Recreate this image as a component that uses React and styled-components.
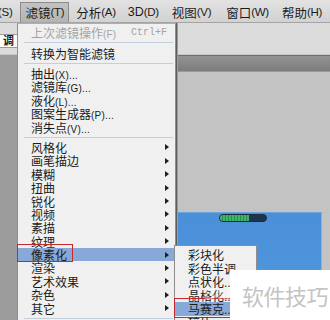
import React from "react";
import styled, { createGlobalStyle } from "styled-components";

const GlobalStyle = createGlobalStyle`
  html, body {
    margin: 0;
    padding: 0;
    background: #c3c3c3;
  }
`;

const FONT = `"Liberation Sans", "Noto Sans CJK SC", sans-serif`;

const Screen = styled.div`
  position: relative;
  width: 330px;
  height: 320px;
  overflow: hidden;
  display: flex;
  flex-direction: column;
  font-family: ${FONT};
  color: #1b1b1b;
`;

const MenuBar = styled.div`
  height: 23px;
  flex: none;
  display: flex;
  align-items: stretch;
  margin-left: -32px;
  padding-top: 2px;
  box-sizing: border-box;
  background: linear-gradient(#e2e2e2, #d2d2d2);
  border-bottom: 1px solid #a4a4a4;
  font-size: 12.5px;
`;

const BarItem = styled.div`
  display: flex;
  align-items: center;
  padding: 0 4px 1px;
  white-space: nowrap;
  border: 1px solid ${({ open }) => (open ? "#8c8c8c" : "transparent")};
  border-bottom: none;
  background: ${({ open }) => (open ? "linear-gradient(#c2c2c2, #b4b4b4)" : "transparent")};
  margin-right: ${({ gap }) => gap}px;
`;

const Paren = styled.span`
  font-size: 11.5px;
  letter-spacing: -0.3px;
`;

const OptionsBar = styled.div`
  height: 32px;
  flex: none;
  display: flex;
  align-items: center;
  background: #dcdcdc;
  border-bottom: 1px solid #c8c8c8;
  box-sizing: border-box;
`;

const Field = styled.div`
  width: 14px;
  height: 12px;
  margin-top: 4px;
  background: #fdfdfd;
  border: 1px solid #9a9a9a;
  border-left: none;
  font-size: 11px;
  font-weight: bold;
  line-height: 12px;
  padding-left: 3px;
  overflow: hidden;
  white-space: nowrap;
  box-sizing: content-box;
`;

const Workspace = styled.div`
  flex: 1;
  display: flex;
  min-height: 0;
`;

const ToolStrip = styled.div`
  width: 17px;
  flex: none;
  background: #9c9c9c;
`;

const MainArea = styled.div`
  flex: 1;
  display: flex;
  flex-direction: column;
`;

const PanelBar = styled.div`
  height: 17px;
  flex: none;
  background: linear-gradient(#939393, #7c7c7c);
  border-top: 1px solid #6e6e6e;
  border-bottom: 1px solid #9a9a9a;
  box-sizing: border-box;
`;

const Canvas = styled.div`
  flex: 1;
  background: #c3c3c3;
  padding: 140px 8px 0 40px;
  display: flex;
`;

const Picture = styled.div`
  flex: 1;
  background: linear-gradient(#4a8fd8, #4f95dc 60%, #4a8ed6);
  border-top: 1px solid #6aa6e0;
  border-right: 1px solid #7fb2e6;
  display: flex;
  justify-content: flex-end;
  padding-right: 54px;
`;

const Meter = styled.div`
  width: 46px;
  height: 6px;
  margin-top: 1px;
  border: 1px solid #1c2c40;
  border-radius: 4px;
  background: #1e3550;
  display: flex;
  overflow: hidden;
`;

const MeterFill = styled.div`
  background: repeating-linear-gradient(90deg, #3fb56a 0 2px, #2c8c52 2px 3px);
`;

const Menu = styled.div`
  position: absolute;
  left: 17px;
  top: 23px;
  width: 159px;
  height: 300px;
  background: #f0f0f0;
  border: 1px solid #8e8e8e;
  border-top-color: #b0b0b0;
  box-shadow: 1px 0 0 #5e5e5e, 2px 0 0 #9a9a9a;
  padding-top: 2px;
  box-sizing: border-box;
  font-size: 12px;
`;

const Row = styled.div`
  position: relative;
  height: ${({ h }) => h}px;
  display: flex;
  align-items: center;
  padding: 0 6px 0 13px;
  white-space: nowrap;
  color: ${({ disabled }) => (disabled ? "#a4a4a4" : "#1b1b1b")};
  background: ${({ active }) => (active ? "#88a8d8" : "transparent")};
`;

const Key = styled.span`
  font-family: "Liberation Sans", sans-serif;
  font-size: 10px;
  letter-spacing: 0.2px;
`;

const Shortcut = styled.span`
  margin-left: auto;
  margin-right: 2px;
  font-family: "Liberation Mono", monospace;
  font-size: 10px;
`;

const Arrow = styled.span`
  margin-left: auto;
  width: 0;
  height: 0;
  border-left: 4px solid #1e1e1e;
  border-top: 3.5px solid transparent;
  border-bottom: 3.5px solid transparent;
`;

const Separator = styled.div`
  height: 7px;
  display: flex;
  align-items: center;
  padding: 0 2px 0 6px;

  &::after {
    content: "";
    flex: 1;
    height: 1px;
    background: #c3cfdc;
  }
`;

const Callout = styled.span`
  position: absolute;
  left: ${({ x }) => x}px;
  top: ${({ y }) => y}px;
  width: ${({ w }) => w}px;
  height: ${({ hh }) => hh}px;
  border: 1.5px solid #c52a2a;
  box-sizing: border-box;
  pointer-events: none;
`;

const SubMenu = styled.div`
  position: absolute;
  left: 174px;
  top: 245px;
  width: 83px;
  height: 90px;
  background: #f0f0f0;
  border: 1px solid #8e8e8e;
  padding-top: 2px;
  box-sizing: border-box;
  font-size: 12px;
`;

const Watermark = styled.div`
  position: absolute;
  left: 230px;
  top: 270px;
  width: 100px;
  height: 50px;
  background: #ffffff;
  display: flex;
  align-items: center;
  padding-left: 12px;
  box-sizing: border-box;
  font-family: "Noto Sans CJK SC", sans-serif;
  font-size: 22px;
  letter-spacing: -0.5px;
  color: #c4c4c4;
  white-space: nowrap;
`;

const LogoGhost = styled.div`
  position: absolute;
  left: 204px;
  top: 284px;
  font-family: "Liberation Sans", sans-serif;
  font-weight: bold;
  font-size: 17px;
  color: rgba(255, 255, 255, 0.45);
  pointer-events: none;
`;

const ROW = 13.4;

const label = (text, key, tail = "") => (
  <span>
    {text}
    {key && <Key>({key})</Key>}
    {tail && <Key>{tail}</Key>}
  </span>
);

const barItems = [
  ["选择", "S", 3],
  ["滤镜", "T", 2],
  ["分析", "A", 2],
  ["3D", "D", 3],
  ["视图", "V", 5],
  ["窗口", "W", 3],
  ["帮助", "H", 0],
];

const topItems = [
  ["抽出", "X"],
  ["滤镜库", "G"],
  ["液化", "L"],
  ["图案生成器", "P"],
  ["消失点", "V"],
];

const filterGroups = [
  "风格化",
  "画笔描边",
  "模糊",
  "扭曲",
  "锐化",
  "视频",
  "素描",
  "纹理",
  "像素化",
  "渲染",
  "艺术效果",
  "杂色",
  "其它",
];

const pixelate = ["彩块化", "彩色半调...", "点状化...", "晶格化...", "马赛克...", "碎片", "铜版雕刻..."];

export default function App() {
  return (
    <>
      <GlobalStyle />
      <Screen>
        <MenuBar>
          {barItems.map(([t, k, g]) => (
            <BarItem key={t} open={t === "滤镜"} gap={g}>
              {t}
              <Paren>({k})</Paren>
            </BarItem>
          ))}
        </MenuBar>
        <OptionsBar>
          <Field>调</Field>
        </OptionsBar>
        <Workspace>
          <ToolStrip />
          <MainArea>
            <PanelBar />
            <Canvas>
              <Picture>
                <div>
                  <Meter>
                    <MeterFill style={{ width: "62%" }} />
                  </Meter>
                </div>
              </Picture>
            </Canvas>
          </MainArea>
        </Workspace>

        <Menu>
          <Row h={ROW} disabled>
            {label("上次滤镜操作", "F")}
            <Shortcut>Ctrl+F</Shortcut>
          </Row>
          <Separator />
          <Row h={ROW}>转换为智能滤镜</Row>
          <Separator />
          {topItems.map(([t, k]) => (
            <Row key={t} h={ROW}>
              {label(t, k, "...")}
            </Row>
          ))}
          <Separator />
          {filterGroups.map((t) => (
            <Row key={t} h={ROW} active={t === "像素化"}>
              {t}
              <Arrow />
              {t === "像素化" && <Callout x={-1} y={-3.5} w={56} hh={18} />}
            </Row>
          ))}
          <Separator />
        </Menu>

        <SubMenu>
          {pixelate.map((t) => (
            <Row key={t} h={13.5} active={t === "马赛克..."}>
              {t}
              {t === "马赛克..." && <Callout x={-1} y={-4} w={59} hh={20} />}
            </Row>
          ))}
        </SubMenu>

        <LogoGhost>Bai</LogoGhost>
        <Watermark>软件技巧</Watermark>
      </Screen>
    </>
  );
}
